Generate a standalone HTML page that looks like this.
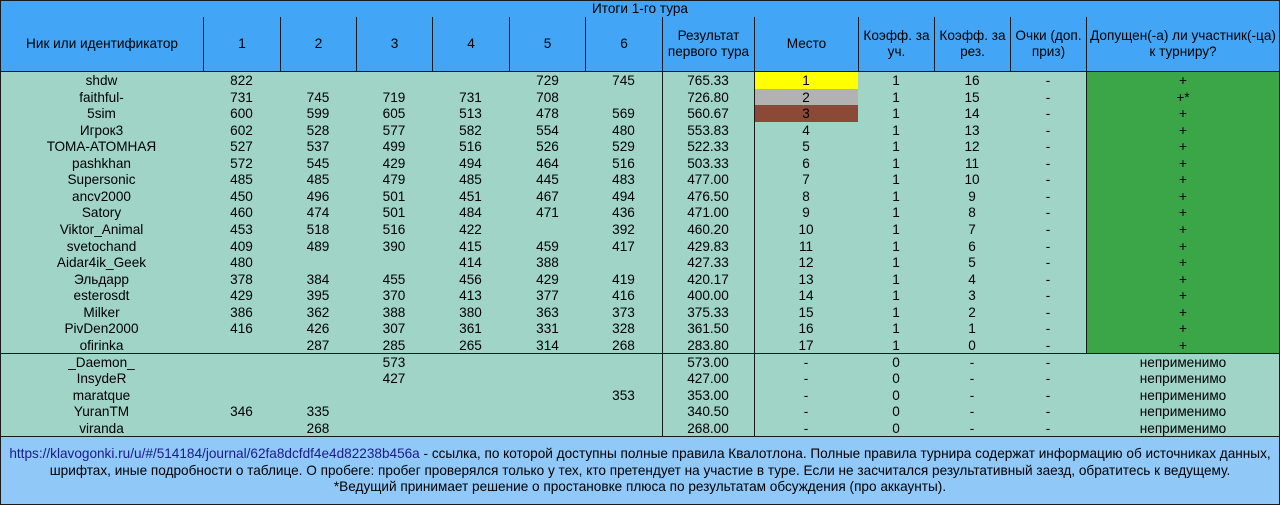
<!DOCTYPE html>
<html><head><meta charset="utf-8"><style>
*{margin:0;padding:0;box-sizing:border-box}
body{width:1280px;height:505px;overflow:hidden;background:#9fd4c7;font-family:"Liberation Sans",sans-serif;font-size:13.6px;color:#000;position:relative}
.a{position:absolute}
.t{left:0;top:0;width:1280px;height:18px;background:#42a5f5;border:1px solid #1a1a1a;text-align:center;line-height:16px}
.h{top:17px;height:55px;background:#42a5f5;border:1px solid #1a1a1a;border-top:none;display:flex;align-items:center;justify-content:center;text-align:center;line-height:16px}
.r{position:absolute;left:0;width:1280px;height:16.55px;line-height:17.5px}
.r span{position:absolute;top:0;text-align:center;height:16.55px;white-space:nowrap}
.vl{position:absolute;width:1px;background:#1a1a1a}
.ft{left:0;top:436px;width:1280px;height:69px;background:#90c8f8;border:1px solid #1a1a1a;text-align:center;line-height:16.5px;padding-top:9px;white-space:nowrap}
.ft a{color:#1b1b8a;text-decoration:none}
</style></head><body>
<div class="a t">Итоги 1-го тура</div>
<div class="a h" style="left:0;width:204px">Ник или идентификатор</div>
<div class="a h" style="left:203px;width:78px">1</div>
<div class="a h" style="left:280px;width:77px">2</div>
<div class="a h" style="left:356px;width:77px">3</div>
<div class="a h" style="left:432px;width:78px">4</div>
<div class="a h" style="left:509px;width:77px">5</div>
<div class="a h" style="left:585px;width:78px">6</div>
<div class="a h" style="left:662px;width:93px">Результат<br>первого тура</div>
<div class="a h" style="left:754px;width:105px">Место</div>
<div class="a h" style="left:858px;width:77px">Коэфф. за<br>уч.</div>
<div class="a h" style="left:934px;width:77px">Коэфф. за<br>рез.</div>
<div class="a h" style="left:1010px;width:77px">Очки (доп.<br>приз)</div>
<div class="a h" style="left:1086px;width:194px;white-space:nowrap">Допущен(-а) ли участник(-ца)<br>к турниру?</div>
<div class="a" style="left:754px;top:72px;width:104px;height:17px;background:#ffff00"></div>
<div class="a" style="left:754px;top:89px;width:104px;height:16px;background:#b2b2b2"></div>
<div class="a" style="left:754px;top:105px;width:104px;height:17px;background:#8b4a38"></div>
<div class="a" style="left:1087px;top:72px;width:193px;height:281px;background:#3ba648"></div>
<div class="vl" style="left:662px;top:72px;height:364px"></div>
<div class="vl" style="left:754px;top:72px;height:364px"></div>
<div class="vl" style="left:1086px;top:72px;height:281px"></div>
<div class="vl" style="left:0;top:72px;height:364px"></div>
<div class="vl" style="left:1279px;top:72px;height:364px"></div>
<div class="a" style="left:0;top:353px;width:1280px;height:1px;background:#1a1a1a"></div>
<div class="a ft"><a>https://klavogonki.ru/u/#/514184/journal/62fa8dcfdf4e4d82238b456a</a> - ссылка, по которой доступны полные правила Квалотлона. Полные правила турнира содержат информацию об источниках данных,<br>шрифтах, иные подробности о таблице. О пробеге: пробег проверялся только у тех, кто претендует на участие в туре. Если не засчитался результативный заезд, обратитесь к ведущему.<br>*Ведущий принимает решение о простановке плюса по результатам обсуждения (про аккаунты).</div>
<div class="r" style="top:72.0px"><span style="left:0;width:203px">shdw</span><span style="left:203px;width:77px">822</span><span style="left:509px;width:77px">729</span><span style="left:585px;width:77px">745</span><span style="left:662px;width:92px">765.33</span><span style="left:754px;width:104px">1</span><span style="left:858px;width:76px">1</span><span style="left:934px;width:76px">16</span><span style="left:1010px;width:76px">-</span><span style="left:1086px;width:194px">+</span></div>
<div class="r" style="top:88.5px"><span style="left:0;width:203px">faithful-</span><span style="left:203px;width:77px">731</span><span style="left:280px;width:76px">745</span><span style="left:356px;width:76px">719</span><span style="left:432px;width:77px">731</span><span style="left:509px;width:77px">708</span><span style="left:662px;width:92px">726.80</span><span style="left:754px;width:104px">2</span><span style="left:858px;width:76px">1</span><span style="left:934px;width:76px">15</span><span style="left:1010px;width:76px">-</span><span style="left:1086px;width:194px">+*</span></div>
<div class="r" style="top:105.1px"><span style="left:0;width:203px">5sim</span><span style="left:203px;width:77px">600</span><span style="left:280px;width:76px">599</span><span style="left:356px;width:76px">605</span><span style="left:432px;width:77px">513</span><span style="left:509px;width:77px">478</span><span style="left:585px;width:77px">569</span><span style="left:662px;width:92px">560.67</span><span style="left:754px;width:104px">3</span><span style="left:858px;width:76px">1</span><span style="left:934px;width:76px">14</span><span style="left:1010px;width:76px">-</span><span style="left:1086px;width:194px">+</span></div>
<div class="r" style="top:121.6px"><span style="left:0;width:203px">Игрок3</span><span style="left:203px;width:77px">602</span><span style="left:280px;width:76px">528</span><span style="left:356px;width:76px">577</span><span style="left:432px;width:77px">582</span><span style="left:509px;width:77px">554</span><span style="left:585px;width:77px">480</span><span style="left:662px;width:92px">553.83</span><span style="left:754px;width:104px">4</span><span style="left:858px;width:76px">1</span><span style="left:934px;width:76px">13</span><span style="left:1010px;width:76px">-</span><span style="left:1086px;width:194px">+</span></div>
<div class="r" style="top:138.2px"><span style="left:0;width:203px">ТОМА-АТОМНАЯ</span><span style="left:203px;width:77px">527</span><span style="left:280px;width:76px">537</span><span style="left:356px;width:76px">499</span><span style="left:432px;width:77px">516</span><span style="left:509px;width:77px">526</span><span style="left:585px;width:77px">529</span><span style="left:662px;width:92px">522.33</span><span style="left:754px;width:104px">5</span><span style="left:858px;width:76px">1</span><span style="left:934px;width:76px">12</span><span style="left:1010px;width:76px">-</span><span style="left:1086px;width:194px">+</span></div>
<div class="r" style="top:154.7px"><span style="left:0;width:203px">pashkhan</span><span style="left:203px;width:77px">572</span><span style="left:280px;width:76px">545</span><span style="left:356px;width:76px">429</span><span style="left:432px;width:77px">494</span><span style="left:509px;width:77px">464</span><span style="left:585px;width:77px">516</span><span style="left:662px;width:92px">503.33</span><span style="left:754px;width:104px">6</span><span style="left:858px;width:76px">1</span><span style="left:934px;width:76px">11</span><span style="left:1010px;width:76px">-</span><span style="left:1086px;width:194px">+</span></div>
<div class="r" style="top:171.3px"><span style="left:0;width:203px">Supersonic</span><span style="left:203px;width:77px">485</span><span style="left:280px;width:76px">485</span><span style="left:356px;width:76px">479</span><span style="left:432px;width:77px">485</span><span style="left:509px;width:77px">445</span><span style="left:585px;width:77px">483</span><span style="left:662px;width:92px">477.00</span><span style="left:754px;width:104px">7</span><span style="left:858px;width:76px">1</span><span style="left:934px;width:76px">10</span><span style="left:1010px;width:76px">-</span><span style="left:1086px;width:194px">+</span></div>
<div class="r" style="top:187.8px"><span style="left:0;width:203px">ancv2000</span><span style="left:203px;width:77px">450</span><span style="left:280px;width:76px">496</span><span style="left:356px;width:76px">501</span><span style="left:432px;width:77px">451</span><span style="left:509px;width:77px">467</span><span style="left:585px;width:77px">494</span><span style="left:662px;width:92px">476.50</span><span style="left:754px;width:104px">8</span><span style="left:858px;width:76px">1</span><span style="left:934px;width:76px">9</span><span style="left:1010px;width:76px">-</span><span style="left:1086px;width:194px">+</span></div>
<div class="r" style="top:204.4px"><span style="left:0;width:203px">Satory</span><span style="left:203px;width:77px">460</span><span style="left:280px;width:76px">474</span><span style="left:356px;width:76px">501</span><span style="left:432px;width:77px">484</span><span style="left:509px;width:77px">471</span><span style="left:585px;width:77px">436</span><span style="left:662px;width:92px">471.00</span><span style="left:754px;width:104px">9</span><span style="left:858px;width:76px">1</span><span style="left:934px;width:76px">8</span><span style="left:1010px;width:76px">-</span><span style="left:1086px;width:194px">+</span></div>
<div class="r" style="top:220.9px"><span style="left:0;width:203px">Viktor_Animal</span><span style="left:203px;width:77px">453</span><span style="left:280px;width:76px">518</span><span style="left:356px;width:76px">516</span><span style="left:432px;width:77px">422</span><span style="left:585px;width:77px">392</span><span style="left:662px;width:92px">460.20</span><span style="left:754px;width:104px">10</span><span style="left:858px;width:76px">1</span><span style="left:934px;width:76px">7</span><span style="left:1010px;width:76px">-</span><span style="left:1086px;width:194px">+</span></div>
<div class="r" style="top:237.5px"><span style="left:0;width:203px">svetochand</span><span style="left:203px;width:77px">409</span><span style="left:280px;width:76px">489</span><span style="left:356px;width:76px">390</span><span style="left:432px;width:77px">415</span><span style="left:509px;width:77px">459</span><span style="left:585px;width:77px">417</span><span style="left:662px;width:92px">429.83</span><span style="left:754px;width:104px">11</span><span style="left:858px;width:76px">1</span><span style="left:934px;width:76px">6</span><span style="left:1010px;width:76px">-</span><span style="left:1086px;width:194px">+</span></div>
<div class="r" style="top:254.0px"><span style="left:0;width:203px">Aidar4ik_Geek</span><span style="left:203px;width:77px">480</span><span style="left:432px;width:77px">414</span><span style="left:509px;width:77px">388</span><span style="left:662px;width:92px">427.33</span><span style="left:754px;width:104px">12</span><span style="left:858px;width:76px">1</span><span style="left:934px;width:76px">5</span><span style="left:1010px;width:76px">-</span><span style="left:1086px;width:194px">+</span></div>
<div class="r" style="top:270.6px"><span style="left:0;width:203px">Эльдарр</span><span style="left:203px;width:77px">378</span><span style="left:280px;width:76px">384</span><span style="left:356px;width:76px">455</span><span style="left:432px;width:77px">456</span><span style="left:509px;width:77px">429</span><span style="left:585px;width:77px">419</span><span style="left:662px;width:92px">420.17</span><span style="left:754px;width:104px">13</span><span style="left:858px;width:76px">1</span><span style="left:934px;width:76px">4</span><span style="left:1010px;width:76px">-</span><span style="left:1086px;width:194px">+</span></div>
<div class="r" style="top:287.1px"><span style="left:0;width:203px">esterosdt</span><span style="left:203px;width:77px">429</span><span style="left:280px;width:76px">395</span><span style="left:356px;width:76px">370</span><span style="left:432px;width:77px">413</span><span style="left:509px;width:77px">377</span><span style="left:585px;width:77px">416</span><span style="left:662px;width:92px">400.00</span><span style="left:754px;width:104px">14</span><span style="left:858px;width:76px">1</span><span style="left:934px;width:76px">3</span><span style="left:1010px;width:76px">-</span><span style="left:1086px;width:194px">+</span></div>
<div class="r" style="top:303.7px"><span style="left:0;width:203px">Milker</span><span style="left:203px;width:77px">386</span><span style="left:280px;width:76px">362</span><span style="left:356px;width:76px">388</span><span style="left:432px;width:77px">380</span><span style="left:509px;width:77px">363</span><span style="left:585px;width:77px">373</span><span style="left:662px;width:92px">375.33</span><span style="left:754px;width:104px">15</span><span style="left:858px;width:76px">1</span><span style="left:934px;width:76px">2</span><span style="left:1010px;width:76px">-</span><span style="left:1086px;width:194px">+</span></div>
<div class="r" style="top:320.2px"><span style="left:0;width:203px">PivDen2000</span><span style="left:203px;width:77px">416</span><span style="left:280px;width:76px">426</span><span style="left:356px;width:76px">307</span><span style="left:432px;width:77px">361</span><span style="left:509px;width:77px">331</span><span style="left:585px;width:77px">328</span><span style="left:662px;width:92px">361.50</span><span style="left:754px;width:104px">16</span><span style="left:858px;width:76px">1</span><span style="left:934px;width:76px">1</span><span style="left:1010px;width:76px">-</span><span style="left:1086px;width:194px">+</span></div>
<div class="r" style="top:336.8px"><span style="left:0;width:203px">ofirinka</span><span style="left:280px;width:76px">287</span><span style="left:356px;width:76px">285</span><span style="left:432px;width:77px">265</span><span style="left:509px;width:77px">314</span><span style="left:585px;width:77px">268</span><span style="left:662px;width:92px">283.80</span><span style="left:754px;width:104px">17</span><span style="left:858px;width:76px">1</span><span style="left:934px;width:76px">0</span><span style="left:1010px;width:76px">-</span><span style="left:1086px;width:194px">+</span></div>
<div class="r" style="top:353.5px"><span style="left:0;width:203px">_Daemon_</span><span style="left:356px;width:76px">573</span><span style="left:662px;width:92px">573.00</span><span style="left:754px;width:104px">-</span><span style="left:858px;width:76px">0</span><span style="left:934px;width:76px">-</span><span style="left:1010px;width:76px">-</span><span style="left:1086px;width:194px">неприменимо</span></div>
<div class="r" style="top:370.0px"><span style="left:0;width:203px">InsydeR</span><span style="left:356px;width:76px">427</span><span style="left:662px;width:92px">427.00</span><span style="left:754px;width:104px">-</span><span style="left:858px;width:76px">0</span><span style="left:934px;width:76px">-</span><span style="left:1010px;width:76px">-</span><span style="left:1086px;width:194px">неприменимо</span></div>
<div class="r" style="top:386.6px"><span style="left:0;width:203px">maratque</span><span style="left:585px;width:77px">353</span><span style="left:662px;width:92px">353.00</span><span style="left:754px;width:104px">-</span><span style="left:858px;width:76px">0</span><span style="left:934px;width:76px">-</span><span style="left:1010px;width:76px">-</span><span style="left:1086px;width:194px">неприменимо</span></div>
<div class="r" style="top:403.1px"><span style="left:0;width:203px">YuranTM</span><span style="left:203px;width:77px">346</span><span style="left:280px;width:76px">335</span><span style="left:662px;width:92px">340.50</span><span style="left:754px;width:104px">-</span><span style="left:858px;width:76px">0</span><span style="left:934px;width:76px">-</span><span style="left:1010px;width:76px">-</span><span style="left:1086px;width:194px">неприменимо</span></div>
<div class="r" style="top:419.7px"><span style="left:0;width:203px">viranda</span><span style="left:280px;width:76px">268</span><span style="left:662px;width:92px">268.00</span><span style="left:754px;width:104px">-</span><span style="left:858px;width:76px">0</span><span style="left:934px;width:76px">-</span><span style="left:1010px;width:76px">-</span><span style="left:1086px;width:194px">неприменимо</span></div>
</body></html>
